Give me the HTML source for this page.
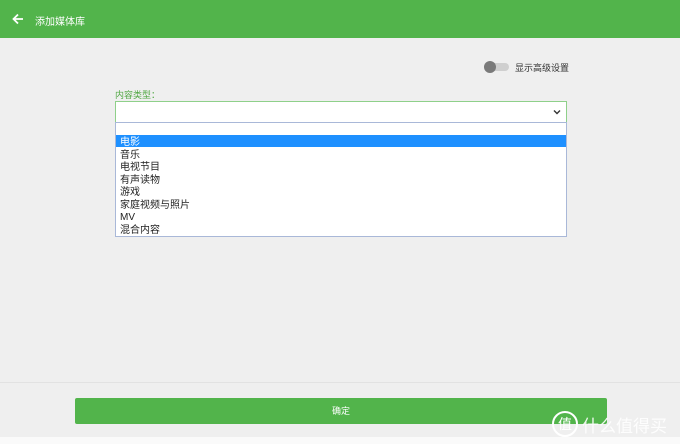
<!DOCTYPE html>
<html><head><meta charset="utf-8"><style>
body{margin:0;width:680px;height:444px;background:#efefef;font-family:"Liberation Sans","Noto Sans CJK SC",sans-serif;position:relative;overflow:hidden}
.hdr{position:absolute;left:0;top:0;width:680px;height:38px;background:#52b44b;color:#fff;font-size:10px}
.abs{position:absolute}
.item{position:absolute;left:116px;width:450px;height:12px;font-size:10px;line-height:12px;padding-left:4px;padding-top:2px;box-sizing:border-box;color:#222}
</style></head><body>
<div class="hdr">
<svg class="abs" style="left:12px;top:13px" width="12" height="12" viewBox="0 0 12 12"><path d="M11 6H2M6 1.5L1.5 6 6 10.5" stroke="#fff" stroke-width="1.8" fill="none"/></svg>
<div class="abs" style="left:35px;top:13px;font-size:10px">添加媒体库</div>
</div>
<div class="abs" style="left:484px;top:63px;width:25px;height:8px;border-radius:4px;background:#cfcfcf"></div>
<div class="abs" style="left:484px;top:61px;width:12px;height:12px;border-radius:6px;background:#7a7a7a"></div>
<div class="abs" style="left:515px;top:61px;font-size:9px;color:#333">显示高级设置</div>
<div class="abs" style="left:115px;top:88px;font-size:9px;color:#52a845">内容类型：</div>
<div class="abs" style="left:115px;top:101px;width:450px;height:20px;background:#fff;border:1px solid #8fd08a"></div>
<svg class="abs" style="left:553px;top:109px" width="8" height="6" viewBox="0 0 8 6"><path d="M1 1.5L4 4.5 7 1.5" stroke="#333" stroke-width="1.4" fill="none"/></svg>
<div class="abs" style="left:115px;top:122px;width:450px;height:113px;background:#fff;border:1px solid #a9b8d8"></div>
<div class="abs" style="left:116px;top:135px;width:450px;height:12px;background:#1e90ff"></div>
<div class="item" style="top:135px;color:#fff">电影</div>
<div class="item" style="top:147.5px">音乐</div>
<div class="item" style="top:160px">电视节目</div>
<div class="item" style="top:172.5px">有声读物</div>
<div class="item" style="top:185px">游戏</div>
<div class="item" style="top:197.5px">家庭视频与照片</div>
<div class="item" style="top:210px">MV</div>
<div class="item" style="top:222.5px">混合内容</div>
<div class="abs" style="left:0;top:382px;width:680px;height:1px;background:#e2e2e2"></div>
<div class="abs" style="left:75px;top:398px;width:532px;height:26px;background:#52b44b;border-radius:2px;color:#fff;font-size:9px;line-height:26px;text-align:center">确定</div>
<div class="abs" style="left:0;top:437px;width:680px;height:7px;background:#fafafa"></div>
<div class="abs" style="left:552px;top:411px;width:26px;height:26px;border-radius:50%;border:2px solid #fff;color:#fff;font-size:14px;line-height:22px;text-align:center;box-sizing:border-box">值</div>
<div class="abs" style="left:582px;top:412px;color:#fff;font-size:17px;opacity:.9">什么值得买</div>
</body></html>
